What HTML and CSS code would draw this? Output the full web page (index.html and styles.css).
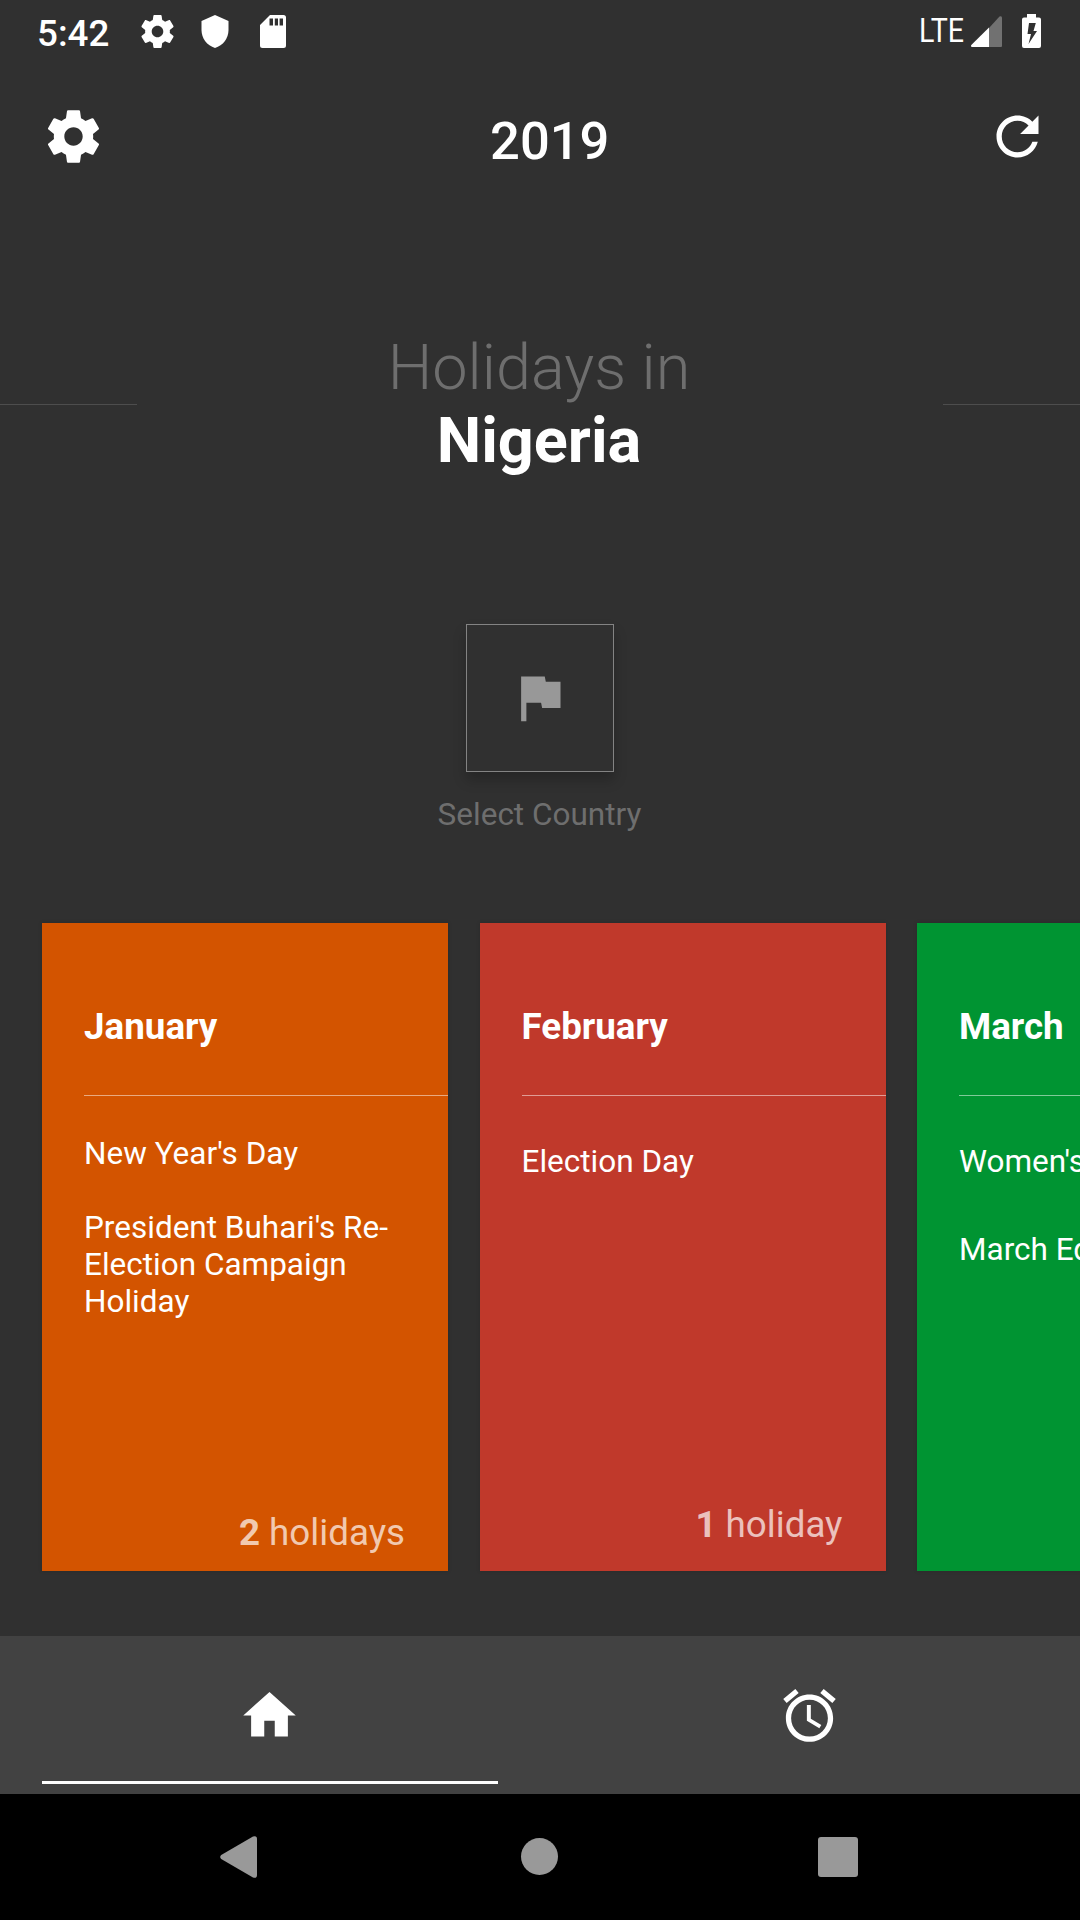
FILE: index.html
```html
<!DOCTYPE html>
<html lang="en">
<head>
<meta charset="utf-8">
<title>Holidays</title>
<link rel="stylesheet" href="styles.css">
</head>
<body>
<div class="screen">
  <div class="status">
    <span class="clock">5:42</span>
    <svg class="st-gear" viewBox="2 2 20 20"><path d="M19.43 12.98c.04-.32.07-.64.07-.98s-.03-.66-.07-.98l2.11-1.65c.19-.15.24-.42.12-.64l-2-3.46c-.12-.22-.39-.3-.61-.22l-2.49 1c-.52-.4-1.08-.73-1.69-.98l-.38-2.65C14.46 2.18 14.25 2 14 2h-4c-.25 0-.46.18-.49.42l-.38 2.65c-.61.25-1.17.59-1.69.98l-2.49-1c-.23-.09-.49 0-.61.22l-2 3.46c-.13.22-.07.49.12.64l2.11 1.65c-.04.32-.07.65-.07.98s.03.66.07.98l-2.11 1.65c-.19.15-.24.42-.12.64l2 3.46c.12.22.39.3.61.22l2.49-1c.52.4 1.08.73 1.69.98l.38 2.65c.03.24.24.42.49.42h4c.25 0 .46-.18.49-.42l.38-2.65c.61-.25 1.17-.59 1.69-.98l2.49 1c.23.09.49 0 .61-.22l2-3.46c.12-.22.07-.49-.12-.64l-2.11-1.65zM12 15.500c-1.930 0-3.500-1.570-3.500-3.500s1.570-3.500 3.500-3.500 3.500 1.570 3.500 3.500-1.570 3.500-3.500 3.500z"/></svg>
    <svg class="st-shield" viewBox="0 0 28 33"><path d="M14 0L27.500 6V15C27.500 23.500 22 30.500 14 33C6 30.500.500 23.500.500 15V6Z"/></svg>
    <svg class="st-card" viewBox="0 0 26 33"><path fill-rule="evenodd" d="M10 0H23.500Q26 0 26 2.500V30.500Q26 33 23.500 33H2.500Q0 33 0 30.500V10ZM9.500 3.500V10.500H13V3.500ZM14.800 3.500V10.500H18V3.500ZM19.600 3.500V10.500H23V3.500Z"/></svg>
    <span class="lte">LTE</span>
    <svg class="st-signal" viewBox="0 0 31 31"><path class="dim" d="M18 12L28.500.600Q31-.800 31 2V30Q31 31 30 31H18Z"/><path d="M18 11.500V31H1Q-.500 30.500.300 29Z"/></svg>
    <svg class="st-battery" viewBox="0 0 19 34"><path fill-rule="evenodd" d="M5 0H14V3.500H17Q19 3.500 19 5.500V32Q19 34 17 34H2Q0 34 0 32V5.500Q0 3.500 2 3.500H5ZM7 9L5.500 20H9L6.500 30L15 17H11.500L13.800 9Z"/></svg>
  </div>

  <header class="topbar">
    <svg class="icon" viewBox="0 0 24 24"><path d="M19.43 12.98c.04-.32.07-.64.07-.98s-.03-.66-.07-.98l2.11-1.65c.19-.15.24-.42.12-.64l-2-3.46c-.12-.22-.39-.3-.61-.22l-2.49 1c-.52-.4-1.08-.73-1.69-.98l-.38-2.65C14.46 2.18 14.25 2 14 2h-4c-.25 0-.46.18-.49.42l-.38 2.65c-.61.25-1.17.59-1.69.98l-2.49-1c-.23-.09-.49 0-.61.22l-2 3.46c-.13.22-.07.49.12.64l2.11 1.65c-.04.32-.07.65-.07.98s.03.66.07.98l-2.11 1.65c-.19.15-.24.42-.12.64l2 3.46c.12.22.39.3.61.22l2.49-1c.52.4 1.08.73 1.69.98l.38 2.65c.03.24.24.42.49.42h4c.25 0 .46-.18.49-.42l.38-2.65c.61-.25 1.17-.59 1.69-.98l2.49 1c.23.09.49 0 .61-.22l2-3.46c.12-.22.07-.49-.12-.64l-2.11-1.65zM12 15.500c-1.930 0-3.500-1.570-3.500-3.500s1.570-3.500 3.500-3.500 3.500 1.570 3.500 3.500-1.570 3.500-3.500 3.500z"/></svg>
    <h1 class="year">2019</h1>
    <svg class="icon" viewBox="0 0 24 24"><path d="M17.650 6.350C16.200 4.900 14.210 4 12 4c-4.420 0-7.990 3.580-7.990 8s3.570 8 7.990 8c3.730 0 6.840-2.550 7.730-6h-2.080c-.82 2.330-3.040 4-5.650 4-3.310 0-6-2.690-6-6s2.690-6 6-6c1.660 0 3.140.69 4.220 1.780L13 11h7V4l-2.350 2.350z"/></svg>
  </header>

  <section class="hero">
    <div class="rule"></div>
    <div class="headline">
      <div class="lead">Holidays in</div>
      <div class="country">Nigeria</div>
    </div>
    <div class="rule"></div>
  </section>

  <section class="picker">
    <div class="flag-box"><svg class="icon flag" viewBox="0 0 24 24"><path d="M14.400 6L14 4H5v17h2v-7h5.600l.4 2h7V6z"/></svg></div>
    <div class="picker-label">Select Country</div>
  </section>

  <main class="months">
    <article class="month january">
      <h2>January</h2>
      <ul class="tight">
        <li>New Year's Day</li>
        <li>President Buhari's Re-Election Campaign Holiday</li>
      </ul>
      <p class="count"><b>2</b> holidays</p>
    </article>
    <article class="month february">
      <h2>February</h2>
      <ul>
        <li>Election Day</li>
      </ul>
      <p class="count raised"><b>1</b> holiday</p>
    </article>
    <article class="month march">
      <h2>March</h2>
      <ul class="clip">
        <li>Women's Day</li>
        <li>March Equinox</li>
      </ul>
    </article>
  </main>

  <nav class="tabs">
    <div class="tab active"><svg class="icon" viewBox="0 0 24 24"><path d="M10 20v-6h4v6h5v-8h3L12 3 2 12h3v8z"/></svg></div>
    <div class="tab"><svg class="icon" viewBox="0 0 24 24"><path d="M22 5.720l-4.600-3.860-1.290 1.530 4.600 3.860L22 5.720zM7.880 3.390L6.600 1.860 2 5.710l1.290 1.530 4.590-3.850zM12.500 8H11v6l4.750 2.850.75-1.230-4-2.370V8zM12 4c-4.970 0-9 4.030-9 9s4.020 9 9 9c4.970 0 9-4.030 9-9s-4.030-9-9-9zm0 16c-3.870 0-7-3.130-7-7s3.130-7 7-7 7 3.130 7 7-3.130 7-7 7z"/></svg></div>
  </nav>

  <footer class="sysnav">
    <svg class="back" viewBox="0 0 37 42"><path d="M1.200 19L33 .500Q37-.800 37 3V39Q37 42.800 33 41.500L1.200 23Q-.800 21 1.200 19Z"/></svg>
    <span class="home"></span>
    <span class="recent"></span>
  </footer>
</div>
</body>
</html>
```
FILE: styles.css
```css
* { box-sizing: border-box; margin: 0; padding: 0; }

body {
  width: 1080px;
  height: 1920px;
  overflow: hidden;
  background: #303030;
  color: #fff;
  font-family: Roboto, sans-serif;
}

svg { display: block; fill: currentColor; flex: none; }
.icon { width: 63px; height: 63px; }

.screen {
  display: flex;
  flex-direction: column;
  width: 1080px;
  height: 1920px;
  overflow: hidden;
}

/* status bar */
.status {
  display: flex;
  align-items: flex-start;
  height: 63px;
  padding: 11px 39px 0 37px;
}
.clock { width: 103.500px; margin-top: 1px; font-size: 36.75px; font-weight: 500; line-height: 43px; }
.st-gear { width: 33px; height: 33px; margin-top: 4px; }
.st-shield { width: 28px; height: 33px; margin: 4px 0 0 27px; }
.st-card { width: 26px; height: 33px; margin: 4px 0 0 31.500px; }
.lte {
  margin: 1px 7px 0 auto;
  font-size: 32.5px;
  line-height: 38px;
  transform: scaleX(.88);
  transform-origin: right;
}
.st-signal { width: 31px; height: 31px; margin-top: 5px; }
.st-signal .dim { fill: #717171; }
.st-battery { width: 19px; height: 34px; margin: 3px 0 0 20px; }

/* app bar */
.topbar {
  display: flex;
  justify-content: space-between;
  height: 141px;
  padding: 42px 31px 0 42px;
}
.year { margin: 5px 0 0 8.500px; font-size: 52.500px; font-weight: 500; line-height: 62px; }

/* title block with side rules */
.hero {
  display: flex;
  align-items: center;
  justify-content: space-between;
  height: 400px;
}
.rule { width: 137px; height: 1px; background: #4d4d4d; }
.headline { padding-right: 2px; text-align: center; font-size: 63px; line-height: 73px; }
.lead { color: #6e6e6e; font-weight: 300; }
.country { font-weight: 700; }

/* country picker */
.picker {
  display: flex;
  flex-direction: column;
  align-items: center;
  height: 319px;
  padding-top: 20px;
}
.flag-box {
  display: grid;
  place-items: center;
  width: 148px;
  height: 148px;
  padding: 0 1px 2px 0;
  border: 1px solid #838383;
  background: #303030;
  color: #989898;
  box-shadow: 0 8px 12px rgba(0, 0, 0, .22);
}
.picker-label { margin-top: 24px; padding-right: 1px; color: #6e6e6e; font-size: 31.500px; line-height: 37px; }

/* month cards */
.months {
  display: flex;
  gap: 31.500px;
  height: 713.400px;
  padding-left: 42px;
}
.month {
  display: flex;
  flex-direction: column;
  flex: none;
  width: 406px;
  height: 648px;
  padding-left: 42px;
  box-shadow: 0 0 4px rgba(0, 0, 0, .14);
}
.january { background: #d35400; }
.february { background: #c0392b; }
.march { background: #009432; }
.month h2 {
  height: 173px;
  padding-top: 82px;
  border-bottom: 1px solid rgba(255, 255, 255, .5);
  font-size: 36.750px;
  font-weight: 700;
  line-height: 43px;
}
.month ul {
  display: flex;
  flex-direction: column;
  gap: 51px;
  padding: 47px 42px 0 0;
  list-style: none;
  font-size: 31.500px;
  line-height: 37px;
}
.month ul.tight { gap: 37px; padding-top: 39px; }
.month ul.clip { white-space: nowrap; }
.count {
  margin: auto 43px 17px 0;
  text-align: right;
  color: rgba(255, 255, 255, .7);
  font-size: 36.750px;
  line-height: 43px;
}
.count.raised { margin-bottom: 25px; }

/* bottom tabs */
.tabs { display: flex; height: 157.600px; background: #424242; }
.tab {
  display: flex;
  flex: 1;
  justify-content: center;
  padding: 48px 1px 0 0;
  position: relative;
}
.tab.active::after {
  content: "";
  position: absolute;
  left: 42px;
  right: 42px;
  bottom: 10px;
  height: 3px;
  background: #fff;
}

/* system navigation */
.sysnav {
  display: flex;
  align-items: center;
  height: 126px;
  padding-left: 220px;
  background: #000;
  color: #999;
}
.back { width: 37px; height: 42px; }
.home { width: 37px; height: 37px; margin: 0 0 1px 264px; border-radius: 50%; background: #999; }
.recent { width: 40px; height: 40px; margin-left: 260px; border-radius: 3px; background: #999; }
```
